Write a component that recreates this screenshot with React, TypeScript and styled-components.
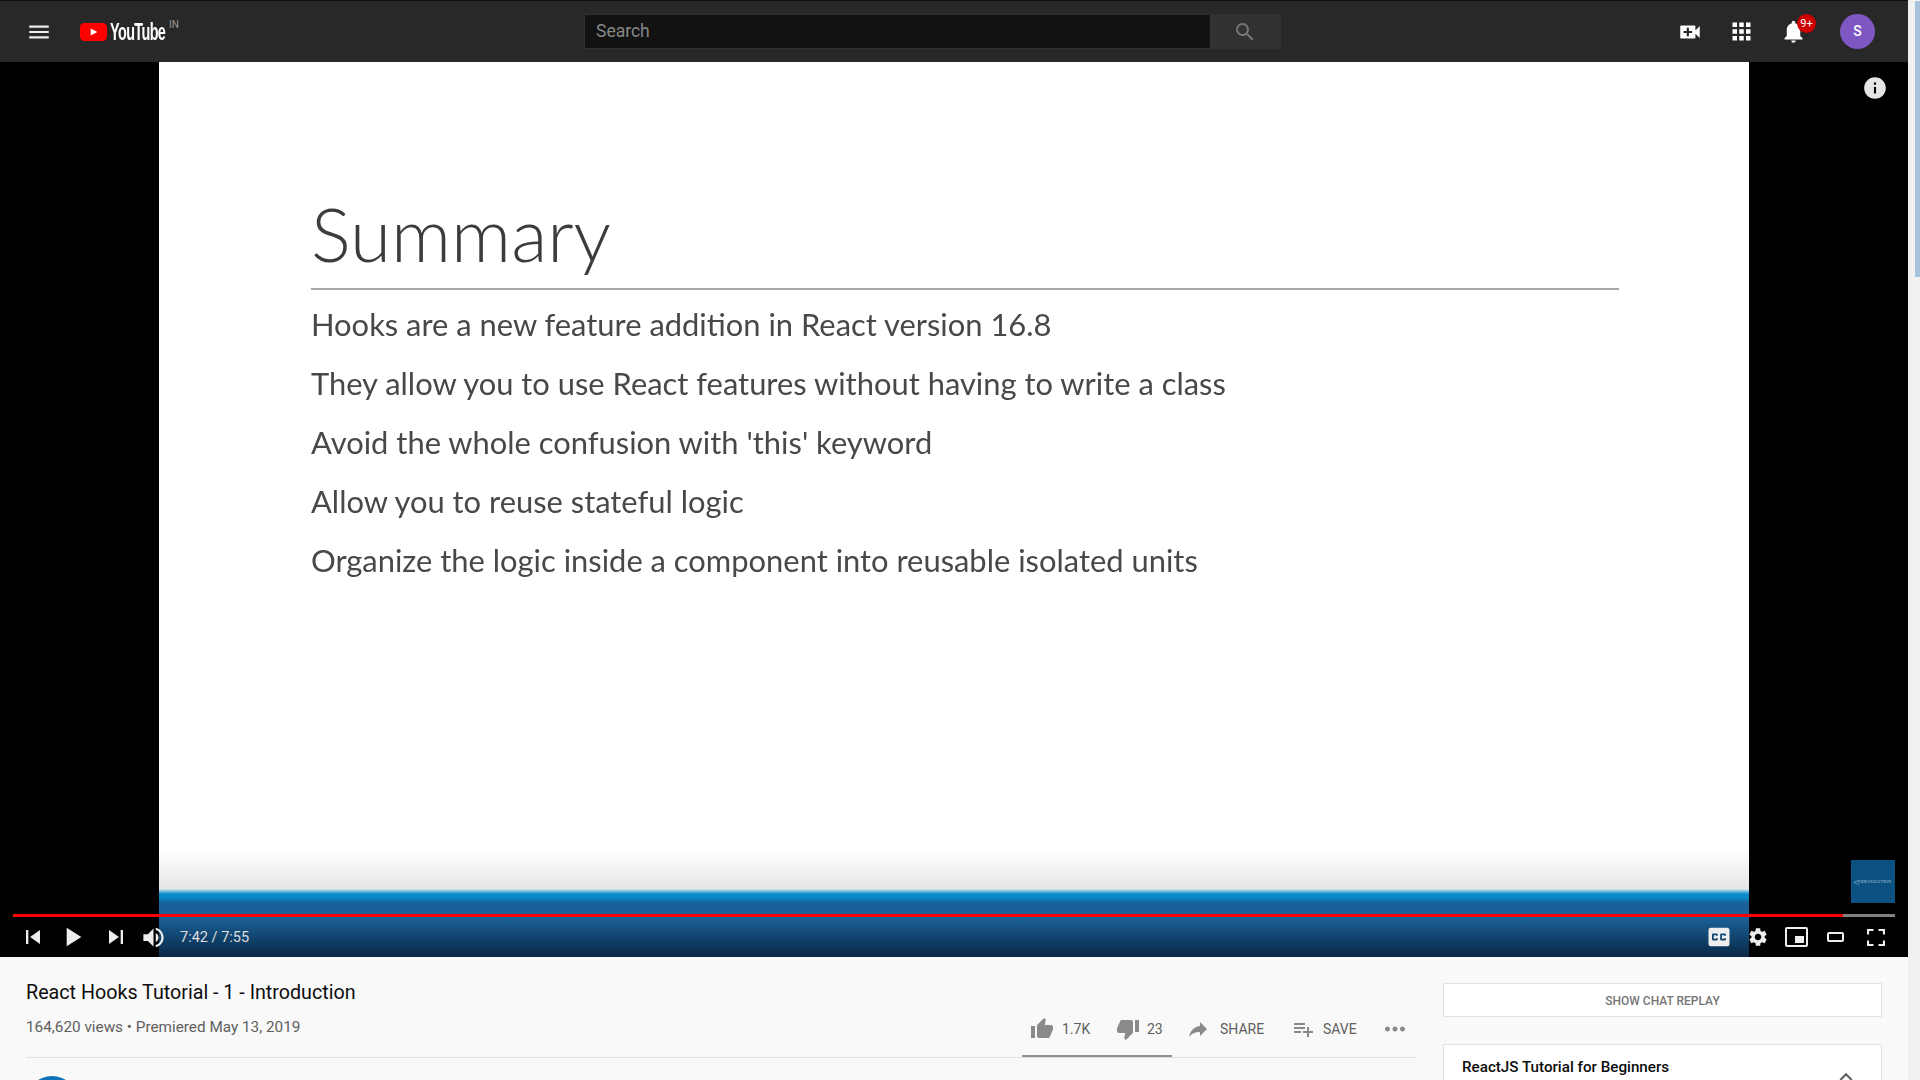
import React from 'react'
import styled, { createGlobalStyle } from 'styled-components'
import {
	MdMenu,
	MdVideoCall,
	MdApps,
	MdNotifications,
	MdSearch,
	MdSkipPrevious,
	MdSkipNext,
	MdPlayArrow,
	MdVolumeUp,
	MdClosedCaption,
	MdSettings,
	MdThumbUp,
	MdThumbDown,
	MdReply,
	MdPlaylistAdd,
	MdMoreHoriz,
	MdExpandLess,
	MdInfo
} from 'react-icons/md'

const slideLines = [
	'Hooks are a new feature addition in React version 16.8',
	'They allow you to use React features without having to write a class',
	"Avoid the whole confusion with 'this' keyword",
	'Allow you to reuse stateful logic',
	'Organize the logic inside a component into reusable isolated units'
]

const GlobalStyle = createGlobalStyle`
	html, body {
		margin: 0;
		height: 100%;
		overflow: hidden;
		background: #f9f9f9;
		font-family: Roboto, "Liberation Sans", sans-serif;
	}
`

const Page = styled.div`
	display: flex;
	width: 1920px;
	height: 1080px;
	overflow: hidden;
`
const Main = styled.div`
	width: 1908px;
	flex: none;
	display: flex;
	flex-direction: column;
`
const ScrollTrack = styled.div`
	flex: 1;
	background: #f1f1f1;
	display: flex;
	justify-content: flex-end;
	align-items: flex-start;
`
const ScrollThumb = styled.div`
	width: 5px;
	height: 276px;
	margin-top: 1px;
	background: #a7c3dc;
`

const TopBar = styled.header`
	height: 61px;
	flex: none;
	border-top: 1px solid #0d0d0d;
	background: #282828;
	display: flex;
	align-items: center;
`
const StartCluster = styled.div`
	width: 584px;
	flex: none;
	display: flex;
	align-items: center;
`
const MenuButton = styled.div`
	display: flex;
	color: #eee;
	margin-left: 26px;
`
const Logo = styled.div`
	display: flex;
	align-items: center;
	margin-left: 28px;
	height: 18px;
`
const LogoWord = styled.span`
	font-family: "Liberation Sans", sans-serif;
	font-size: 24px;
	font-weight: 700;
	line-height: 18px;
	color: #fff;
	letter-spacing: -1px;
	transform: scaleX(0.6);
	transform-origin: left center;
	margin-left: 3px;
	width: 56px;
	white-space: nowrap;
`
const LogoRegion = styled.span`
	font-size: 10px;
	color: #999;
	align-self: flex-start;
	margin: -3px 0 0 3px;
	line-height: 10px;
`
const SearchBox = styled.div`
	width: 697px;
	height: 35px;
	flex: none;
	display: flex;
	box-sizing: border-box;
	border: 1px solid #303030;
`
const SearchInput = styled.div`
	flex: 1;
	background: #121212;
	color: #888;
	font-size: 17.5px;
	line-height: 33px;
	padding-left: 11px;
`
const SearchButton = styled.div`
	width: 70px;
	background: #323232;
	color: #777;
	display: flex;
	align-items: center;
	justify-content: center;
`
const TopActions = styled.div`
	margin-left: auto;
	display: flex;
	align-items: center;
	gap: 25px;
	padding-right: 33px;
	color: #fff;
`
const Bell = styled.div`
	position: relative;
	display: flex;
`
const Badge = styled.span`
	position: absolute;
	left: 17px;
	top: -4px;
	width: 19px;
	height: 19px;
	border-radius: 50%;
	background: #cc0000;
	color: #fff;
	font-size: 11px;
	line-height: 19px;
	text-align: center;
`
const Avatar = styled.div`
	width: 35px;
	height: 35px;
	border-radius: 50%;
	background: #7e57c2;
	color: #fff;
	font-size: 14px;
	font-weight: 500;
	line-height: 35px;
	text-align: center;
	margin-left: 8px;
`

const Player = styled.section`
	height: 895px;
	flex: none;
	background: #000;
	position: relative;
	display: flex;
	justify-content: center;
`
const Slide = styled.div`
	width: 1590px;
	background: #fff;
	display: flex;
	flex-direction: column;
	padding: 132px 130px 0 152px;
	box-sizing: border-box;
	position: relative;
	font-family: Lato, "Open Sans", sans-serif;
`
const SlideTitle = styled.h1`
	margin: 0 0 5px;
	font-size: 74.6px;
	line-height: 78px;
	font-weight: 300;
	color: #3c3c3c;
	padding-bottom: 16px;
	border-bottom: 2px solid #a8a8a8;
	filter: blur(0.4px);
`
const SlideLine = styled.div`
	font-size: 30.9px;
	line-height: 59px;
	font-weight: 400;
	color: #484848;
	filter: blur(0.4px);
`
const SlideFooter = styled.div`
	position: absolute;
	left: 0;
	right: 0;
	bottom: 0;
	height: 68px;
	background: linear-gradient(
		to bottom,
		#dfe9ee 0,
		#7fc0dd 2px,
		#0a8cc8 5px,
		#0b87c3 9px,
		#19609a 14px,
		#1a5f96 30px,
		#0e3a60 55px,
		#0b2844 68px
	);
`
const TopFade = styled.div`
	position: absolute;
	left: 0;
	right: 0;
	bottom: 68px;
	height: 40px;
	background: linear-gradient(to bottom, #fff, #e6e6e6);
`
const InfoIcon = styled.div`
	position: absolute;
	right: 20px;
	top: 13px;
	display: flex;
	color: #e6e6e6;
`
const Watermark = styled.div`
	position: absolute;
	left: 1851px;
	top: 798px;
	width: 44px;
	height: 43px;
	background: #0b5283;
	color: #a8c4d6;
	font-family: "Liberation Serif", serif;
	font-size: 4.6px;
	display: flex;
	align-items: center;
	white-space: nowrap;
	overflow: hidden;
	padding-left: 2px;
	box-sizing: border-box;
`
const WatermarkMark = styled.span`
	font-size: 11px;
	margin-right: -1px;
`
const Progress = styled.div`
	position: absolute;
	left: 13px;
	top: 852px;
	width: 1882px;
	height: 3px;
	background: rgba(255, 255, 255, 0.5);
`
const ProgressFill = styled.div`
	height: 100%;
	background: #ff0000;
`
const Controls = styled.div`
	position: absolute;
	left: 13px;
	right: 13px;
	bottom: 0;
	height: 40px;
	display: flex;
	align-items: center;
	color: #eee;
	padding: 0 10px 0 6px;
	box-sizing: border-box;
`
const ControlGroup = styled.div<{ $gap: number }>`
	display: flex;
	align-items: center;
	gap: ${(p) => p.$gap}px;
`
const PlayButton = styled.span`
	display: flex;
	margin: 0 4px 0 -1px;
`
const CaptionButton = styled.span`
	display: flex;
	margin-right: -2px;
`
const TimeLabel = styled.span`
	font-size: 14.5px;
	color: #ddd;
	margin-left: 13px;
`
const Spacer = styled.div`
	flex: 1;
`
const OutlineBox = styled.div<{ $w: number; $h: number; $ml?: number }>`
	width: ${(p) => p.$w}px;
	height: ${(p) => p.$h}px;
	margin-left: ${(p) => p.$ml || 0}px;
	box-sizing: border-box;
	border: 2px solid #eee;
	border-radius: 2px;
	position: relative;
`
const MiniInner = styled.div`
	position: absolute;
	right: 2px;
	bottom: 2px;
	width: 9px;
	height: 7px;
	background: #eee;
`
const FullButton = styled.span`
	display: flex;
	margin-left: 7px;
`

const Below = styled.div`
	flex: 1;
	display: flex;
	background: #f9f9f9;
	overflow: hidden;
`
const Primary = styled.div`
	width: 1391px;
	margin-left: 26px;
	flex: none;
`
const VideoTitle = styled.h2`
	margin: 23px 0 0;
	font-size: 19.7px;
	line-height: 26px;
	font-weight: 400;
	color: #0d0d0d;
`
const InfoRow = styled.div`
	display: flex;
	align-items: flex-end;
	justify-content: space-between;
	border-bottom: 1px solid #e0e0e0;
	height: 51px;
	position: relative;
`
const Meta = styled.div`
	font-size: 15.3px;
	line-height: 20px;
	color: #606060;
	align-self: flex-start;
	margin-top: 11px;
`
const Actions = styled.div`
	display: flex;
	align-items: center;
	height: 56px;
	flex: none;
	padding-right: 7px;
`
const Action = styled.div<{ $w: number; $gap: number }>`
	display: flex;
	align-items: center;
	width: ${(p) => p.$w}px;
	gap: ${(p) => p.$gap}px;
	font-size: 14px;
	font-weight: 400;
	color: #606060;
`
const ActionIcon = styled.span`
	display: flex;
	color: #8a8a8a;
`
const SentimentBar = styled.div`
	position: absolute;
	left: 996px;
	bottom: 0;
	width: 150px;
	height: 2px;
	background: #909090;
`
const ChannelDot = styled.div`
	width: 52px;
	height: 52px;
	margin-top: 18px;
	border-radius: 50%;
	background: #0f74bb;
`
const Secondary = styled.div`
	width: 439px;
	margin-left: 26px;
	flex: none;
	padding-top: 26px;
`
const ChatReplay = styled.div`
	height: 34px;
	box-sizing: border-box;
	background: #fff;
	border: 1px solid #e2e2e2;
	font-size: 12px;
	font-weight: 500;
	line-height: 34px;
	text-align: center;
	color: #757575;
`
const PlaylistCard = styled.div`
	margin-top: 27px;
	height: 120px;
	background: #fff;
	border: 1px solid #e2e2e2;
	display: flex;
	justify-content: space-between;
	padding: 12px 22px 0 18px;
	box-sizing: border-box;
`
const PlaylistTitle = styled.div`
	font-size: 15.2px;
	line-height: 20px;
	font-weight: 500;
	color: #0d0d0d;
`
const PlaylistToggle = styled.div`
	display: flex;
	color: #606060;
	margin-top: 7px;
`

const App = () => (
	<Page>
		<GlobalStyle />
		<Main>
			<TopBar>
				<StartCluster>
					<MenuButton>
						<MdMenu size={26} />
					</MenuButton>
					<Logo>
						<svg width="27" height="18" viewBox="0 0 27 18">
							<rect width="27" height="18" rx="4.5" fill="#ff0000" />
							<path d="M10.7 5.6l6.7 3.4-6.7 3.4z" fill="#fff" />
						</svg>
						<LogoWord>YouTube</LogoWord>
						<LogoRegion>IN</LogoRegion>
					</Logo>
				</StartCluster>
				<SearchBox>
					<SearchInput>Search</SearchInput>
					<SearchButton>
						<MdSearch size={24} />
					</SearchButton>
				</SearchBox>
				<TopActions>
					<MdVideoCall size={26} />
					<MdApps size={27} />
					<Bell>
						<MdNotifications size={27} />
						<Badge>9+</Badge>
					</Bell>
					<Avatar>S</Avatar>
				</TopActions>
			</TopBar>
			<Player>
				<Slide>
					<SlideTitle>Summary</SlideTitle>
					{slideLines.map((line) => (
						<SlideLine key={line}>{line}</SlideLine>
					))}
					<TopFade />
					<SlideFooter />
				</Slide>
				<InfoIcon>
					<MdInfo size={26} />
				</InfoIcon>
				<Watermark>
					<WatermarkMark>&lt;</WatermarkMark>ODEVOLUTION
				</Watermark>
				<Progress>
					<ProgressFill style={{ width: `${(462 / 475) * 100}%` }} />
				</Progress>
				<Controls>
					<ControlGroup $gap={10}>
						<MdSkipPrevious size={28} />
						<PlayButton>
							<MdPlayArrow size={32} />
						</PlayButton>
						<MdSkipNext size={28} />
						<MdVolumeUp size={27} />
					</ControlGroup>
					<TimeLabel>7:42 / 7:55</TimeLabel>
					<Spacer />
					<ControlGroup $gap={16}>
						<CaptionButton>
							<MdClosedCaption size={28} />
						</CaptionButton>
						<MdSettings size={22} />
						<OutlineBox $w={23} $h={20}>
							<MiniInner />
						</OutlineBox>
						<OutlineBox $w={17} $h={10} $ml={3} />
						<FullButton>
							<svg width="18" height="17" viewBox="0 0 18 17" fill="none" stroke="#eee" strokeWidth="2.2">
								<path d="M1 5.5V1h5.5M11.5 1H17v4.5M17 11.5V16h-5.5M6.5 16H1v-4.5" />
							</svg>
						</FullButton>
					</ControlGroup>
				</Controls>
			</Player>
			<Below>
				<Primary>
					<VideoTitle>React Hooks Tutorial - 1 - Introduction</VideoTitle>
					<InfoRow>
						<Meta>164,620 views • Premiered May 13, 2019</Meta>
						<Actions>
							<Action $w={86} $gap={8}>
								<ActionIcon>
									<MdThumbUp size={24} />
								</ActionIcon>
								1.7K
							</Action>
							<Action $w={70} $gap={7}>
								<ActionIcon>
									<MdThumbDown size={24} />
								</ActionIcon>
								23
							</Action>
							<Action $w={105} $gap={10}>
								<ActionIcon>
									<MdReply size={24} style={{ transform: 'scaleX(-1)' }} />
								</ActionIcon>
								SHARE
							</Action>
							<Action $w={89} $gap={8}>
								<ActionIcon>
									<MdPlaylistAdd size={24} />
								</ActionIcon>
								SAVE
							</Action>
							<ActionIcon>
								<MdMoreHoriz size={30} />
							</ActionIcon>
						</Actions>
						<SentimentBar />
					</InfoRow>
					<ChannelDot />
				</Primary>
				<Secondary>
					<ChatReplay>SHOW CHAT REPLAY</ChatReplay>
					<PlaylistCard>
						<PlaylistTitle>ReactJS Tutorial for Beginners</PlaylistTitle>
						<PlaylistToggle>
							<MdExpandLess size={26} />
						</PlaylistToggle>
					</PlaylistCard>
				</Secondary>
			</Below>
		</Main>
		<ScrollTrack>
			<ScrollThumb />
		</ScrollTrack>
	</Page>
)

export default App as React.FunctionComponent
